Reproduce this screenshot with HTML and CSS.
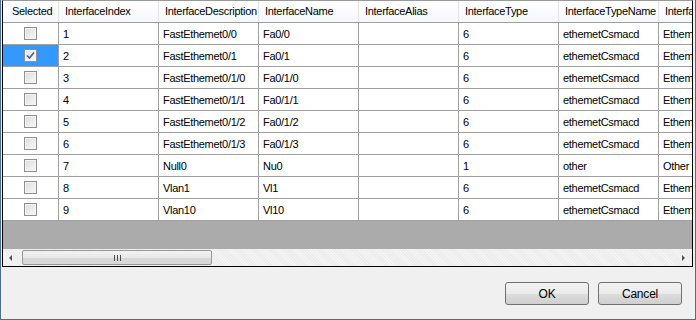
FILE: index.html
```html
<!DOCTYPE html>
<html lang="en">
<head>
    <meta charset="UTF-8">
    <title>Select Interfaces</title>
    <link rel="stylesheet" href="styles.css">
</head>
<body>
    <div class="window">
        <div class="grid">
            <div class="rows">
                <div class="row head">
                    <div class="cell c-sel">Selected</div>
                    <div class="cell">InterfaceIndex</div>
                    <div class="cell">InterfaceDescription</div>
                    <div class="cell">InterfaceName</div>
                    <div class="cell">InterfaceAlias</div>
                    <div class="cell">InterfaceType</div>
                    <div class="cell">InterfaceTypeName</div>
                    <div class="cell">InterfaceTypeDescription</div>
                </div>
                <div class="row">
                    <div class="cell c-sel"><span class="check"></span></div>
                    <div class="cell">1</div>
                    <div class="cell">FastEthemet0/0</div>
                    <div class="cell">Fa0/0</div>
                    <div class="cell"></div>
                    <div class="cell">6</div>
                    <div class="cell">ethemetCsmacd</div>
                    <div class="cell">Ethemet</div>
                </div>
                <div class="row">
                    <div class="cell c-sel current"><span class="check checked"><svg width="9" height="9" viewBox="0 0 9 9"><path d="M1 4.5 L3.5 7 L8 1.5" fill="none" stroke="#4b5e93" stroke-width="1.6"/></svg></span></div>
                    <div class="cell">2</div>
                    <div class="cell">FastEthemet0/1</div>
                    <div class="cell">Fa0/1</div>
                    <div class="cell"></div>
                    <div class="cell">6</div>
                    <div class="cell">ethemetCsmacd</div>
                    <div class="cell">Ethemet</div>
                </div>
                <div class="row">
                    <div class="cell c-sel"><span class="check"></span></div>
                    <div class="cell">3</div>
                    <div class="cell">FastEthemet0/1/0</div>
                    <div class="cell">Fa0/1/0</div>
                    <div class="cell"></div>
                    <div class="cell">6</div>
                    <div class="cell">ethemetCsmacd</div>
                    <div class="cell">Ethemet</div>
                </div>
                <div class="row">
                    <div class="cell c-sel"><span class="check"></span></div>
                    <div class="cell">4</div>
                    <div class="cell">FastEthemet0/1/1</div>
                    <div class="cell">Fa0/1/1</div>
                    <div class="cell"></div>
                    <div class="cell">6</div>
                    <div class="cell">ethemetCsmacd</div>
                    <div class="cell">Ethemet</div>
                </div>
                <div class="row">
                    <div class="cell c-sel"><span class="check"></span></div>
                    <div class="cell">5</div>
                    <div class="cell">FastEthemet0/1/2</div>
                    <div class="cell">Fa0/1/2</div>
                    <div class="cell"></div>
                    <div class="cell">6</div>
                    <div class="cell">ethemetCsmacd</div>
                    <div class="cell">Ethemet</div>
                </div>
                <div class="row">
                    <div class="cell c-sel"><span class="check"></span></div>
                    <div class="cell">6</div>
                    <div class="cell">FastEthemet0/1/3</div>
                    <div class="cell">Fa0/1/3</div>
                    <div class="cell"></div>
                    <div class="cell">6</div>
                    <div class="cell">ethemetCsmacd</div>
                    <div class="cell">Ethemet</div>
                </div>
                <div class="row">
                    <div class="cell c-sel"><span class="check"></span></div>
                    <div class="cell">7</div>
                    <div class="cell">Null0</div>
                    <div class="cell">Nu0</div>
                    <div class="cell"></div>
                    <div class="cell">1</div>
                    <div class="cell">other</div>
                    <div class="cell">Other</div>
                </div>
                <div class="row">
                    <div class="cell c-sel"><span class="check"></span></div>
                    <div class="cell">8</div>
                    <div class="cell">Vlan1</div>
                    <div class="cell">Vl1</div>
                    <div class="cell"></div>
                    <div class="cell">6</div>
                    <div class="cell">ethemetCsmacd</div>
                    <div class="cell">Ethemet</div>
                </div>
                <div class="row">
                    <div class="cell c-sel"><span class="check"></span></div>
                    <div class="cell">9</div>
                    <div class="cell">Vlan10</div>
                    <div class="cell">Vl10</div>
                    <div class="cell"></div>
                    <div class="cell">6</div>
                    <div class="cell">ethemetCsmacd</div>
                    <div class="cell">Ethemet</div>
                </div>
            </div>
            <div class="hscroll">
                <span class="arrow left"></span>
                <div class="track">
                    <div class="thumb"><span class="grip"></span></div>
                </div>
                <span class="arrow right"></span>
            </div>
        </div>
        <div class="buttons">
            <button class="btn">OK</button>
            <button class="btn">Cancel</button>
        </div>
    </div>
</body>
</html>
```

FILE: styles.css
```css
body {
    margin: 0;
    background: #f0f0f0;
    font-family: 'Liberation Sans', Arial, sans-serif;
    font-size: 11px;
    letter-spacing: -0.3px;
    color: #000;
}

.window {
    width: 691px;
    height: 319px;
    padding: 0 2px 0 1px;
    border: 1px solid #4d6d8c;
    border-top: none;
    background: #f0f0f0;
    display: flex;
    flex-direction: column;
}

.grid {
    height: 265px;
    border: 1px solid #000;
    border-top-color: #9a9a9a;
    background: #ababab;
    display: flex;
    flex-direction: column;
    overflow: hidden;
}

.rows {
    flex: 1;
    overflow: hidden;
}

.row {
    display: flex;
    height: 21px;
    border-bottom: 1px solid #a0a0a0;
    background: #fff;
    white-space: nowrap;
}

.cell {
    flex: 0 0 100px;
    border-right: 1px solid #a0a0a0;
    padding: 1px 0 0 4px;
    box-sizing: border-box;
    line-height: 21px;
    overflow: hidden;
}

.c-sel {
    flex-basis: 56px;
    display: flex;
    align-items: center;
    justify-content: center;
    padding: 0;
}

.head {
    background: linear-gradient(#ffffff, #f6f7f9);
}

.head .cell {
    border-right-color: #e3e3e3;
    padding: 0 0 0 6px;
}

.head .c-sel {
    justify-content: flex-start;
    padding-left: 9px;
}

.current {
    background: #3399ff;
}

.check {
    width: 11px;
    height: 11px;
    border: 1px solid #8e8f8f;
    background: linear-gradient(135deg, #dcdcdc, #f8f8f8);
    box-shadow: inset 0 0 0 1px #f4f4f4;
    display: flex;
    align-items: center;
    justify-content: center;
}

.checked {
    background: linear-gradient(135deg, #dfe6ef, #f6f8fb);
}

.hscroll {
    height: 17px;
    display: flex;
    align-items: center;
    background: repeating-linear-gradient(45deg, #ececec 0 1px, #f4f4f4 1px 2px);
}

.arrow {
    width: 18px;
    height: 17px;
    position: relative;
}

.arrow::after {
    content: "";
    position: absolute;
    top: 6px;
    border-top: 3px solid transparent;
    border-bottom: 3px solid transparent;
}

.arrow.left::after {
    left: 6px;
    border-right: 3px solid #505050;
}

.arrow.right {
    width: 17px;
}

.arrow.right::after {
    left: 7px;
    border-left: 3px solid #505050;
}

.track {
    flex: 1;
    height: 17px;
    display: flex;
    align-items: center;
}

.thumb {
    width: 188px;
    height: 13px;
    border: 1px solid #979797;
    border-radius: 2px;
    background: linear-gradient(#f3f3f3, #e8e8e8 50%, #d6d6d6 51%, #d9d9d9);
    display: flex;
    align-items: center;
    justify-content: center;
    margin-left: 1px;
}

.grip {
    width: 7px;
    height: 6px;
    background: repeating-linear-gradient(90deg, #4a4a4a 0 1px, transparent 1px 3px);
}

.buttons {
    flex: 1;
    display: flex;
    justify-content: flex-end;
    align-items: flex-start;
    gap: 9px;
    padding: 15px 11px 0 0;
}

.btn {
    width: 84px;
    height: 23px;
    border: 1px solid #707070;
    border-radius: 3px;
    background: linear-gradient(#f2f2f2, #ebebeb 50%, #dddddd 51%, #cfcfcf);
    font-family: 'Liberation Sans', Arial, sans-serif;
    font-size: 12px;
    letter-spacing: -0.2px;
    color: #000;
    padding: 0;
}
```
